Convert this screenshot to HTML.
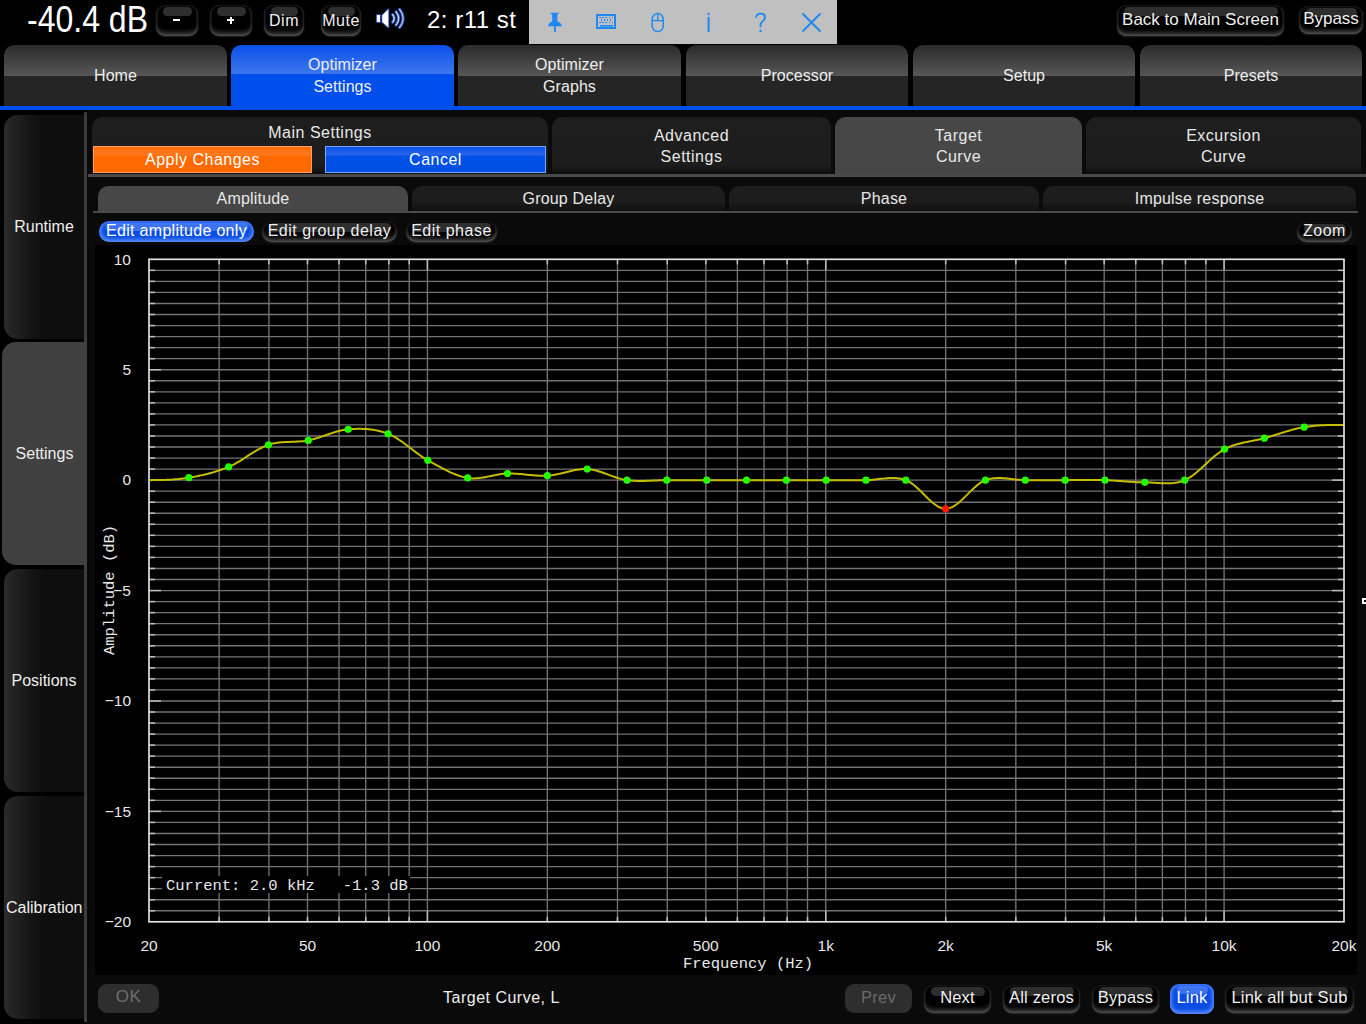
<!DOCTYPE html>
<html><head><meta charset="utf-8">
<style>
*{box-sizing:border-box;margin:0;padding:0}
html,body{width:1366px;height:1024px;overflow:hidden;background:#000}
body{position:relative;font-family:"Liberation Sans",sans-serif;color:#f0f0f0;letter-spacing:.5px}
svg{letter-spacing:0}
.a{position:absolute}
.c{display:flex;align-items:center;justify-content:center;text-align:center;white-space:nowrap}
.gb{position:absolute;background:#000;border-radius:9px;box-shadow:inset 0 -5px 5px -2px rgba(150,150,150,.5),inset 0 0 3px rgba(100,100,100,.6),0 1px 2px rgba(70,70,70,.5);display:flex;align-items:center;justify-content:center;white-space:nowrap;color:#f0f0f0;font-size:16px}
.gb::before{content:"";position:absolute;left:7px;right:6px;top:2px;height:9px;border-radius:5px;background:#2e2e2e}
.gb span{position:relative;top:-1px}
.bb{position:absolute;background:#0a4de4;box-shadow:inset 0 0 4px 1px rgba(120,160,255,.75),inset 0 -3px 4px rgba(110,150,255,.5);display:flex;align-items:center;justify-content:center;white-space:nowrap;color:#fff}
.bb::before{content:"";position:absolute;left:7px;right:6px;top:2px;height:8px;border-radius:5px;background:rgba(120,160,255,.45)}
.bb span{position:relative}
.mt{position:absolute;top:45px;letter-spacing:.05px;height:61px;border-radius:10px 10px 0 0;background:linear-gradient(#2a2a2a,#575757 31px,#252525 31px,#252525);font-size:16px;line-height:22px;color:#eee}
.mt.sel{background:linear-gradient(#0a50ea,#3e76ec 29px,#004fec 29px,#004fec)}
.lt{position:absolute;left:4px;width:80px;letter-spacing:0;border-radius:14px 0 0 14px;background:linear-gradient(90deg,#2a2a2a,#141414 28px,#0e0e0e 40px,#0e0e0e);font-size:16px;color:#eee}
.st{position:absolute;top:117px;height:58px;border-radius:11px 11px 0 0;background:linear-gradient(#1e1e1e,#1d1d1d 48px,#0c0c0c);font-size:16px;line-height:21px;color:#e8e8e8}
.st.sel{background:#474747}
.t2{position:absolute;top:186px;height:26px;letter-spacing:.2px;border-radius:10px 10px 0 0;background:linear-gradient(#1e1e1e,#1c1c1c 16px,#0e0e0e);font-size:16px;color:#e8e8e8}
.t2.sel{background:#474747}
.ax{font-family:"Liberation Sans",sans-serif;font-size:15.5px;fill:#e8e8e8}
.mono{font-family:"Liberation Mono",monospace;font-size:15.5px;fill:#e8e8e8}
</style></head><body>
<!-- top bar -->
<div class="a" style="left:27px;top:0;height:40px;font-size:32px;line-height:40px;color:#fff;letter-spacing:0;transform:scaleY(1.13);transform-origin:0 50%">-40.4 dB</div>
<div class="gb" style="left:156px;top:5px;width:42px;height:31px"></div><div class="a" style="left:173px;top:19px;width:6.5px;height:2.4px;background:#fff"></div>
<div class="gb" style="left:210px;top:5px;width:42px;height:31px"></div><div class="a" style="left:227px;top:19.3px;width:7.2px;height:2.2px;background:#fff"></div><div class="a" style="left:229.5px;top:16.8px;width:2.2px;height:7.4px;background:#fff"></div>
<div class="gb" style="left:264px;top:5px;width:40px;height:31px;font-size:16px"><span style="top:0px">Dim</span></div>
<div class="gb" style="left:321px;top:5px;width:40px;height:31px;font-size:16px"><span style="top:0px">Mute</span></div>
<svg class="a" style="left:374px;top:8px" width="34" height="22" viewBox="0 0 34 22">
 <g stroke="#1d3f96" stroke-width="2" stroke-linejoin="round" fill="#fff">
 <rect x="2.8" y="7" width="3.2" height="7"/>
 <path d="M8.2 7.2 L14.4 1.2 V19.6 L8.2 14 Z"/>
 </g>
 <rect x="2.8" y="7" width="3.2" height="7" fill="#fff"/>
 <path d="M8.2 7.2 L14.4 1.2 V19.6 L8.2 14 Z" fill="#fff"/>
 <g fill="none" stroke-linecap="round">
 <path d="M18.6 6.6 Q21.8 10.4 18.6 14.2" stroke="#2c52b4" stroke-width="3.2"/>
 <path d="M22 3.8 Q27.2 10.4 22 17" stroke="#2c52b4" stroke-width="3.2"/>
 <path d="M25.6 1.4 Q32.4 10.4 25.6 19.4" stroke="#2c52b4" stroke-width="3.2"/>
 <path d="M18.6 6.6 Q21.8 10.4 18.6 14.2" stroke="#e6ecff" stroke-width="1.2" stroke-dasharray="1.6 1"/>
 <path d="M22 3.8 Q27.2 10.4 22 17" stroke="#e6ecff" stroke-width="1.2" stroke-dasharray="1.6 1"/>
 <path d="M25.6 1.4 Q32.4 10.4 25.6 19.4" stroke="#c8d4f4" stroke-width="1.2" stroke-dasharray="1.6 1"/>
 </g>
</svg>
<div class="a" style="left:427px;top:0;height:40px;line-height:40px;font-size:24px;color:#fff">2: r11 st</div>
<div class="a" style="left:529px;top:0;width:308px;height:44px;background:#c0c0c0"></div>
<svg class="a" style="left:529px;top:0" width="308" height="44" viewBox="0 0 308 44">
 <g fill="#1f88f5">
 <path d="M21.2 12.8 H30.1 L28.3 15 V21.3 Q32 22.5 33.1 26.2 H18.9 Q20 22.5 23.2 21.3 V15 Z"/>
 <rect x="25.1" y="26" width="1.8" height="6"/>
 <path d="M67 14 H87 V29 H67 Z M69 16 V27 H85 V16 Z" fill-rule="evenodd"/>
 <rect x="70" y="16.9" width="2.5" height="1"/><rect x="73" y="16.9" width="2" height="1"/><rect x="76" y="16.9" width="2" height="1"/><rect x="80" y="16.9" width="1" height="1"/><rect x="83" y="16.9" width="1" height="1"/>
 <rect x="72" y="18.8" width="1" height="2.3"/><rect x="75" y="18.8" width="1" height="2.3"/><rect x="78" y="18.8" width="1" height="2.3"/><rect x="81" y="18.8" width="1" height="2.3"/>
 <rect x="70" y="22" width="2.5" height="1"/><rect x="73" y="22" width="2" height="1"/><rect x="76" y="22" width="2" height="1"/><rect x="80" y="22" width="1" height="1"/><rect x="83" y="22" width="1" height="1"/>
 <rect x="71" y="25" width="13" height="1.7"/>
 <rect x="178.6" y="12.9" width="2" height="2.3"/><rect x="178.6" y="16.9" width="2" height="15.1"/>
 <rect x="230.5" y="29.8" width="2" height="2.2"/>
 </g>
 <rect x="123.2" y="13.6" width="11" height="18" rx="5.5" fill="none" stroke="#1f88f5" stroke-width="1.5"/>
 <path d="M123 20.6 H134.4 M128.7 13.6 V20.6" stroke="#1f88f5" stroke-width="1.3"/>
 <path d="M227 17.6 Q227.5 13.6 231.7 13.6 Q236 13.6 236 17.4 Q236 19.8 233.2 21.8 Q231.5 23 231.5 25.2 V27.2" fill="none" stroke="#1f88f5" stroke-width="1.9"/>
 <path d="M273.5 13.5 L291.5 31.5 M291.5 13.5 L273.5 31.5" stroke="#1f88f5" stroke-width="1.9"/>
</svg>
<div class="gb" style="left:1117px;top:5px;width:167px;height:31px;font-size:17px;letter-spacing:0px"><span>Back to Main Screen</span></div>
<div class="gb" style="left:1299px;top:6px;width:64px;height:28px;font-size:17px;letter-spacing:0px"><span>Bypass</span></div>

<!-- main tabs -->
<div class="mt c" style="left:4px;width:223px">Home</div>
<div class="mt c sel" style="left:231px;width:223px">Optimizer<br>Settings</div>
<div class="mt c" style="left:458px;width:223px">Optimizer<br>Graphs</div>
<div class="mt c" style="left:686px;width:222px">Processor</div>
<div class="mt c" style="left:913px;width:222px">Setup</div>
<div class="mt c" style="left:1140px;width:222px">Presets</div>
<div class="a" style="left:0;top:106px;width:1366px;height:4px;background:#004fec"></div>

<!-- left panel -->
<div class="a" style="left:87px;top:110px;width:1279px;height:914px;background:#0a0a0a"></div>
<div class="a" style="left:84px;top:112px;width:3px;height:910px;background:#3c3c3c"></div>
<div class="lt c" style="top:115px;height:224px">Runtime</div>
<div class="a c" style="left:2px;top:342px;width:85px;height:223px;border-radius:14px 0 0 14px;background:#404040;font-size:16px;color:#eee;letter-spacing:0">Settings</div>
<div class="lt c" style="top:569px;height:223px">Positions</div>
<div class="lt c" style="top:796px;height:223px;justify-content:flex-start;padding-left:2px">Calibration</div>

<!-- sub tabs -->
<div class="st" style="left:92px;width:456px">
  <div class="a c" style="left:0;top:5px;width:456px;height:20px">Main Settings</div>
</div>
<div class="a c" style="left:93px;top:146px;width:219px;height:27px;background:linear-gradient(#ff6d0a,#ff7a20 8px,#ff6a00 9px,#ff6a00);border:1px solid #ffa060;font-size:16px;color:#fff">Apply Changes</div>
<div class="a c" style="left:325px;top:146px;width:221px;height:27px;background:linear-gradient(#0a52e8,#2a66ea 8px,#0050e6 9px,#0050e6);border:1px solid #7aa4ff;font-size:16px;color:#fff">Cancel</div>
<div class="st c" style="left:552px;width:279px">Advanced<br>Settings</div>
<div class="st c sel" style="left:835px;width:247px;height:60px;padding-bottom:3px">Target<br>Curve</div>
<div class="st c" style="left:1086px;width:275px">Excursion<br>Curve</div>
<div class="a" style="left:88px;top:174px;width:1278px;height:3px;background:#4a4a4a"></div>

<div class="t2 c sel" style="left:98px;width:310px">Amplitude</div>
<div class="t2 c" style="left:412px;width:313px">Group Delay</div>
<div class="t2 c" style="left:729px;width:310px">Phase</div>
<div class="t2 c" style="left:1043px;width:313px">Impulse response</div>
<div class="a" style="left:93px;top:211px;width:1265px;height:2px;background:#4a4a4a"></div>

<div class="bb" style="left:99px;top:221px;width:155px;height:21px;border-radius:11px;font-size:16px;letter-spacing:.3px"><span style="top:-1px">Edit amplitude only</span></div>
<div class="gb" style="left:262px;top:221px;width:135px;height:21px;border-radius:11px;font-size:16px"><span>Edit group delay</span></div>
<div class="gb" style="left:406px;top:221px;width:91px;height:21px;border-radius:11px;font-size:16px"><span>Edit phase</span></div>
<div class="gb" style="left:1297px;top:222px;width:55px;height:20px;border-radius:10px;font-size:16px"><span>Zoom</span></div>

<!-- chart -->
<div class="a" style="left:95px;top:245px;width:1262px;height:730px;background:#000"></div>
<svg class="a" style="left:0;top:0" width="1366" height="1024" viewBox="0 0 1366 1024">
<line x1="149.0" y1="270.34" x2="1344.0" y2="270.34" stroke="#737373" stroke-width="1.35"/>
<line x1="149.0" y1="281.38" x2="1344.0" y2="281.38" stroke="#737373" stroke-width="1.35"/>
<line x1="149.0" y1="292.43" x2="1344.0" y2="292.43" stroke="#737373" stroke-width="1.35"/>
<line x1="149.0" y1="303.47" x2="1344.0" y2="303.47" stroke="#737373" stroke-width="1.35"/>
<line x1="149.0" y1="314.51" x2="1344.0" y2="314.51" stroke="#737373" stroke-width="1.35"/>
<line x1="149.0" y1="325.55" x2="1344.0" y2="325.55" stroke="#737373" stroke-width="1.35"/>
<line x1="149.0" y1="336.59" x2="1344.0" y2="336.59" stroke="#737373" stroke-width="1.35"/>
<line x1="149.0" y1="347.63" x2="1344.0" y2="347.63" stroke="#737373" stroke-width="1.35"/>
<line x1="149.0" y1="358.68" x2="1344.0" y2="358.68" stroke="#737373" stroke-width="1.35"/>
<line x1="149.0" y1="369.72" x2="1344.0" y2="369.72" stroke="#737373" stroke-width="1.35"/>
<line x1="149.0" y1="380.76" x2="1344.0" y2="380.76" stroke="#737373" stroke-width="1.35"/>
<line x1="149.0" y1="391.80" x2="1344.0" y2="391.80" stroke="#737373" stroke-width="1.35"/>
<line x1="149.0" y1="402.84" x2="1344.0" y2="402.84" stroke="#737373" stroke-width="1.35"/>
<line x1="149.0" y1="413.88" x2="1344.0" y2="413.88" stroke="#737373" stroke-width="1.35"/>
<line x1="149.0" y1="424.93" x2="1344.0" y2="424.93" stroke="#737373" stroke-width="1.35"/>
<line x1="149.0" y1="435.97" x2="1344.0" y2="435.97" stroke="#737373" stroke-width="1.35"/>
<line x1="149.0" y1="447.01" x2="1344.0" y2="447.01" stroke="#737373" stroke-width="1.35"/>
<line x1="149.0" y1="458.05" x2="1344.0" y2="458.05" stroke="#737373" stroke-width="1.35"/>
<line x1="149.0" y1="469.09" x2="1344.0" y2="469.09" stroke="#737373" stroke-width="1.35"/>
<line x1="149.0" y1="480.13" x2="1344.0" y2="480.13" stroke="#737373" stroke-width="1.35"/>
<line x1="149.0" y1="491.18" x2="1344.0" y2="491.18" stroke="#737373" stroke-width="1.35"/>
<line x1="149.0" y1="502.22" x2="1344.0" y2="502.22" stroke="#737373" stroke-width="1.35"/>
<line x1="149.0" y1="513.26" x2="1344.0" y2="513.26" stroke="#737373" stroke-width="1.35"/>
<line x1="149.0" y1="524.30" x2="1344.0" y2="524.30" stroke="#737373" stroke-width="1.35"/>
<line x1="149.0" y1="535.34" x2="1344.0" y2="535.34" stroke="#737373" stroke-width="1.35"/>
<line x1="149.0" y1="546.38" x2="1344.0" y2="546.38" stroke="#737373" stroke-width="1.35"/>
<line x1="149.0" y1="557.42" x2="1344.0" y2="557.42" stroke="#737373" stroke-width="1.35"/>
<line x1="149.0" y1="568.47" x2="1344.0" y2="568.47" stroke="#737373" stroke-width="1.35"/>
<line x1="149.0" y1="579.51" x2="1344.0" y2="579.51" stroke="#737373" stroke-width="1.35"/>
<line x1="149.0" y1="590.55" x2="1344.0" y2="590.55" stroke="#737373" stroke-width="1.35"/>
<line x1="149.0" y1="601.59" x2="1344.0" y2="601.59" stroke="#737373" stroke-width="1.35"/>
<line x1="149.0" y1="612.63" x2="1344.0" y2="612.63" stroke="#737373" stroke-width="1.35"/>
<line x1="149.0" y1="623.67" x2="1344.0" y2="623.67" stroke="#737373" stroke-width="1.35"/>
<line x1="149.0" y1="634.72" x2="1344.0" y2="634.72" stroke="#737373" stroke-width="1.35"/>
<line x1="149.0" y1="645.76" x2="1344.0" y2="645.76" stroke="#737373" stroke-width="1.35"/>
<line x1="149.0" y1="656.80" x2="1344.0" y2="656.80" stroke="#737373" stroke-width="1.35"/>
<line x1="149.0" y1="667.84" x2="1344.0" y2="667.84" stroke="#737373" stroke-width="1.35"/>
<line x1="149.0" y1="678.88" x2="1344.0" y2="678.88" stroke="#737373" stroke-width="1.35"/>
<line x1="149.0" y1="689.92" x2="1344.0" y2="689.92" stroke="#737373" stroke-width="1.35"/>
<line x1="149.0" y1="700.97" x2="1344.0" y2="700.97" stroke="#737373" stroke-width="1.35"/>
<line x1="149.0" y1="712.01" x2="1344.0" y2="712.01" stroke="#737373" stroke-width="1.35"/>
<line x1="149.0" y1="723.05" x2="1344.0" y2="723.05" stroke="#737373" stroke-width="1.35"/>
<line x1="149.0" y1="734.09" x2="1344.0" y2="734.09" stroke="#737373" stroke-width="1.35"/>
<line x1="149.0" y1="745.13" x2="1344.0" y2="745.13" stroke="#737373" stroke-width="1.35"/>
<line x1="149.0" y1="756.17" x2="1344.0" y2="756.17" stroke="#737373" stroke-width="1.35"/>
<line x1="149.0" y1="767.22" x2="1344.0" y2="767.22" stroke="#737373" stroke-width="1.35"/>
<line x1="149.0" y1="778.26" x2="1344.0" y2="778.26" stroke="#737373" stroke-width="1.35"/>
<line x1="149.0" y1="789.30" x2="1344.0" y2="789.30" stroke="#737373" stroke-width="1.35"/>
<line x1="149.0" y1="800.34" x2="1344.0" y2="800.34" stroke="#737373" stroke-width="1.35"/>
<line x1="149.0" y1="811.38" x2="1344.0" y2="811.38" stroke="#737373" stroke-width="1.35"/>
<line x1="149.0" y1="822.42" x2="1344.0" y2="822.42" stroke="#737373" stroke-width="1.35"/>
<line x1="149.0" y1="833.47" x2="1344.0" y2="833.47" stroke="#737373" stroke-width="1.35"/>
<line x1="149.0" y1="844.51" x2="1344.0" y2="844.51" stroke="#737373" stroke-width="1.35"/>
<line x1="149.0" y1="855.55" x2="1344.0" y2="855.55" stroke="#737373" stroke-width="1.35"/>
<line x1="149.0" y1="866.59" x2="1344.0" y2="866.59" stroke="#737373" stroke-width="1.35"/>
<line x1="149.0" y1="877.63" x2="1344.0" y2="877.63" stroke="#737373" stroke-width="1.35"/>
<line x1="149.0" y1="888.67" x2="1344.0" y2="888.67" stroke="#737373" stroke-width="1.35"/>
<line x1="149.0" y1="899.72" x2="1344.0" y2="899.72" stroke="#737373" stroke-width="1.35"/>
<line x1="149.0" y1="910.76" x2="1344.0" y2="910.76" stroke="#737373" stroke-width="1.35"/>
<line x1="219.14" y1="259.3" x2="219.14" y2="921.8" stroke="#737373" stroke-width="1.35"/>
<line x1="268.91" y1="259.3" x2="268.91" y2="921.8" stroke="#737373" stroke-width="1.35"/>
<line x1="307.51" y1="259.3" x2="307.51" y2="921.8" stroke="#737373" stroke-width="1.35"/>
<line x1="339.05" y1="259.3" x2="339.05" y2="921.8" stroke="#737373" stroke-width="1.35"/>
<line x1="365.72" y1="259.3" x2="365.72" y2="921.8" stroke="#737373" stroke-width="1.35"/>
<line x1="388.82" y1="259.3" x2="388.82" y2="921.8" stroke="#737373" stroke-width="1.35"/>
<line x1="409.20" y1="259.3" x2="409.20" y2="921.8" stroke="#737373" stroke-width="1.35"/>
<line x1="427.42" y1="259.3" x2="427.42" y2="921.8" stroke="#737373" stroke-width="1.35"/>
<line x1="547.33" y1="259.3" x2="547.33" y2="921.8" stroke="#737373" stroke-width="1.35"/>
<line x1="617.48" y1="259.3" x2="617.48" y2="921.8" stroke="#737373" stroke-width="1.35"/>
<line x1="667.24" y1="259.3" x2="667.24" y2="921.8" stroke="#737373" stroke-width="1.35"/>
<line x1="705.85" y1="259.3" x2="705.85" y2="921.8" stroke="#737373" stroke-width="1.35"/>
<line x1="737.39" y1="259.3" x2="737.39" y2="921.8" stroke="#737373" stroke-width="1.35"/>
<line x1="764.05" y1="259.3" x2="764.05" y2="921.8" stroke="#737373" stroke-width="1.35"/>
<line x1="787.15" y1="259.3" x2="787.15" y2="921.8" stroke="#737373" stroke-width="1.35"/>
<line x1="807.53" y1="259.3" x2="807.53" y2="921.8" stroke="#737373" stroke-width="1.35"/>
<line x1="825.76" y1="259.3" x2="825.76" y2="921.8" stroke="#737373" stroke-width="1.35"/>
<line x1="945.67" y1="259.3" x2="945.67" y2="921.8" stroke="#737373" stroke-width="1.35"/>
<line x1="1015.81" y1="259.3" x2="1015.81" y2="921.8" stroke="#737373" stroke-width="1.35"/>
<line x1="1065.58" y1="259.3" x2="1065.58" y2="921.8" stroke="#737373" stroke-width="1.35"/>
<line x1="1104.18" y1="259.3" x2="1104.18" y2="921.8" stroke="#737373" stroke-width="1.35"/>
<line x1="1135.72" y1="259.3" x2="1135.72" y2="921.8" stroke="#737373" stroke-width="1.35"/>
<line x1="1162.39" y1="259.3" x2="1162.39" y2="921.8" stroke="#737373" stroke-width="1.35"/>
<line x1="1185.49" y1="259.3" x2="1185.49" y2="921.8" stroke="#737373" stroke-width="1.35"/>
<line x1="1205.86" y1="259.3" x2="1205.86" y2="921.8" stroke="#737373" stroke-width="1.35"/>
<line x1="1224.09" y1="259.3" x2="1224.09" y2="921.8" stroke="#737373" stroke-width="1.35"/>
<line x1="149.0" y1="270.34" x2="155.0" y2="270.34" stroke="#bdbdbd" stroke-width="1.5"/>
<line x1="1338.0" y1="270.34" x2="1344.0" y2="270.34" stroke="#bdbdbd" stroke-width="1.5"/>
<line x1="149.0" y1="281.38" x2="155.0" y2="281.38" stroke="#bdbdbd" stroke-width="1.5"/>
<line x1="1338.0" y1="281.38" x2="1344.0" y2="281.38" stroke="#bdbdbd" stroke-width="1.5"/>
<line x1="149.0" y1="292.43" x2="155.0" y2="292.43" stroke="#bdbdbd" stroke-width="1.5"/>
<line x1="1338.0" y1="292.43" x2="1344.0" y2="292.43" stroke="#bdbdbd" stroke-width="1.5"/>
<line x1="149.0" y1="303.47" x2="155.0" y2="303.47" stroke="#bdbdbd" stroke-width="1.5"/>
<line x1="1338.0" y1="303.47" x2="1344.0" y2="303.47" stroke="#bdbdbd" stroke-width="1.5"/>
<line x1="149.0" y1="314.51" x2="155.0" y2="314.51" stroke="#bdbdbd" stroke-width="1.5"/>
<line x1="1338.0" y1="314.51" x2="1344.0" y2="314.51" stroke="#bdbdbd" stroke-width="1.5"/>
<line x1="149.0" y1="325.55" x2="155.0" y2="325.55" stroke="#bdbdbd" stroke-width="1.5"/>
<line x1="1338.0" y1="325.55" x2="1344.0" y2="325.55" stroke="#bdbdbd" stroke-width="1.5"/>
<line x1="149.0" y1="336.59" x2="155.0" y2="336.59" stroke="#bdbdbd" stroke-width="1.5"/>
<line x1="1338.0" y1="336.59" x2="1344.0" y2="336.59" stroke="#bdbdbd" stroke-width="1.5"/>
<line x1="149.0" y1="347.63" x2="155.0" y2="347.63" stroke="#bdbdbd" stroke-width="1.5"/>
<line x1="1338.0" y1="347.63" x2="1344.0" y2="347.63" stroke="#bdbdbd" stroke-width="1.5"/>
<line x1="149.0" y1="358.68" x2="155.0" y2="358.68" stroke="#bdbdbd" stroke-width="1.5"/>
<line x1="1338.0" y1="358.68" x2="1344.0" y2="358.68" stroke="#bdbdbd" stroke-width="1.5"/>
<line x1="149.0" y1="369.72" x2="161.0" y2="369.72" stroke="#bdbdbd" stroke-width="1.5"/>
<line x1="1332.0" y1="369.72" x2="1344.0" y2="369.72" stroke="#bdbdbd" stroke-width="1.5"/>
<line x1="149.0" y1="380.76" x2="155.0" y2="380.76" stroke="#bdbdbd" stroke-width="1.5"/>
<line x1="1338.0" y1="380.76" x2="1344.0" y2="380.76" stroke="#bdbdbd" stroke-width="1.5"/>
<line x1="149.0" y1="391.80" x2="155.0" y2="391.80" stroke="#bdbdbd" stroke-width="1.5"/>
<line x1="1338.0" y1="391.80" x2="1344.0" y2="391.80" stroke="#bdbdbd" stroke-width="1.5"/>
<line x1="149.0" y1="402.84" x2="155.0" y2="402.84" stroke="#bdbdbd" stroke-width="1.5"/>
<line x1="1338.0" y1="402.84" x2="1344.0" y2="402.84" stroke="#bdbdbd" stroke-width="1.5"/>
<line x1="149.0" y1="413.88" x2="155.0" y2="413.88" stroke="#bdbdbd" stroke-width="1.5"/>
<line x1="1338.0" y1="413.88" x2="1344.0" y2="413.88" stroke="#bdbdbd" stroke-width="1.5"/>
<line x1="149.0" y1="424.93" x2="155.0" y2="424.93" stroke="#bdbdbd" stroke-width="1.5"/>
<line x1="1338.0" y1="424.93" x2="1344.0" y2="424.93" stroke="#bdbdbd" stroke-width="1.5"/>
<line x1="149.0" y1="435.97" x2="155.0" y2="435.97" stroke="#bdbdbd" stroke-width="1.5"/>
<line x1="1338.0" y1="435.97" x2="1344.0" y2="435.97" stroke="#bdbdbd" stroke-width="1.5"/>
<line x1="149.0" y1="447.01" x2="155.0" y2="447.01" stroke="#bdbdbd" stroke-width="1.5"/>
<line x1="1338.0" y1="447.01" x2="1344.0" y2="447.01" stroke="#bdbdbd" stroke-width="1.5"/>
<line x1="149.0" y1="458.05" x2="155.0" y2="458.05" stroke="#bdbdbd" stroke-width="1.5"/>
<line x1="1338.0" y1="458.05" x2="1344.0" y2="458.05" stroke="#bdbdbd" stroke-width="1.5"/>
<line x1="149.0" y1="469.09" x2="155.0" y2="469.09" stroke="#bdbdbd" stroke-width="1.5"/>
<line x1="1338.0" y1="469.09" x2="1344.0" y2="469.09" stroke="#bdbdbd" stroke-width="1.5"/>
<line x1="149.0" y1="480.13" x2="161.0" y2="480.13" stroke="#bdbdbd" stroke-width="1.5"/>
<line x1="1332.0" y1="480.13" x2="1344.0" y2="480.13" stroke="#bdbdbd" stroke-width="1.5"/>
<line x1="149.0" y1="491.18" x2="155.0" y2="491.18" stroke="#bdbdbd" stroke-width="1.5"/>
<line x1="1338.0" y1="491.18" x2="1344.0" y2="491.18" stroke="#bdbdbd" stroke-width="1.5"/>
<line x1="149.0" y1="502.22" x2="155.0" y2="502.22" stroke="#bdbdbd" stroke-width="1.5"/>
<line x1="1338.0" y1="502.22" x2="1344.0" y2="502.22" stroke="#bdbdbd" stroke-width="1.5"/>
<line x1="149.0" y1="513.26" x2="155.0" y2="513.26" stroke="#bdbdbd" stroke-width="1.5"/>
<line x1="1338.0" y1="513.26" x2="1344.0" y2="513.26" stroke="#bdbdbd" stroke-width="1.5"/>
<line x1="149.0" y1="524.30" x2="155.0" y2="524.30" stroke="#bdbdbd" stroke-width="1.5"/>
<line x1="1338.0" y1="524.30" x2="1344.0" y2="524.30" stroke="#bdbdbd" stroke-width="1.5"/>
<line x1="149.0" y1="535.34" x2="155.0" y2="535.34" stroke="#bdbdbd" stroke-width="1.5"/>
<line x1="1338.0" y1="535.34" x2="1344.0" y2="535.34" stroke="#bdbdbd" stroke-width="1.5"/>
<line x1="149.0" y1="546.38" x2="155.0" y2="546.38" stroke="#bdbdbd" stroke-width="1.5"/>
<line x1="1338.0" y1="546.38" x2="1344.0" y2="546.38" stroke="#bdbdbd" stroke-width="1.5"/>
<line x1="149.0" y1="557.42" x2="155.0" y2="557.42" stroke="#bdbdbd" stroke-width="1.5"/>
<line x1="1338.0" y1="557.42" x2="1344.0" y2="557.42" stroke="#bdbdbd" stroke-width="1.5"/>
<line x1="149.0" y1="568.47" x2="155.0" y2="568.47" stroke="#bdbdbd" stroke-width="1.5"/>
<line x1="1338.0" y1="568.47" x2="1344.0" y2="568.47" stroke="#bdbdbd" stroke-width="1.5"/>
<line x1="149.0" y1="579.51" x2="155.0" y2="579.51" stroke="#bdbdbd" stroke-width="1.5"/>
<line x1="1338.0" y1="579.51" x2="1344.0" y2="579.51" stroke="#bdbdbd" stroke-width="1.5"/>
<line x1="149.0" y1="590.55" x2="161.0" y2="590.55" stroke="#bdbdbd" stroke-width="1.5"/>
<line x1="1332.0" y1="590.55" x2="1344.0" y2="590.55" stroke="#bdbdbd" stroke-width="1.5"/>
<line x1="149.0" y1="601.59" x2="155.0" y2="601.59" stroke="#bdbdbd" stroke-width="1.5"/>
<line x1="1338.0" y1="601.59" x2="1344.0" y2="601.59" stroke="#bdbdbd" stroke-width="1.5"/>
<line x1="149.0" y1="612.63" x2="155.0" y2="612.63" stroke="#bdbdbd" stroke-width="1.5"/>
<line x1="1338.0" y1="612.63" x2="1344.0" y2="612.63" stroke="#bdbdbd" stroke-width="1.5"/>
<line x1="149.0" y1="623.67" x2="155.0" y2="623.67" stroke="#bdbdbd" stroke-width="1.5"/>
<line x1="1338.0" y1="623.67" x2="1344.0" y2="623.67" stroke="#bdbdbd" stroke-width="1.5"/>
<line x1="149.0" y1="634.72" x2="155.0" y2="634.72" stroke="#bdbdbd" stroke-width="1.5"/>
<line x1="1338.0" y1="634.72" x2="1344.0" y2="634.72" stroke="#bdbdbd" stroke-width="1.5"/>
<line x1="149.0" y1="645.76" x2="155.0" y2="645.76" stroke="#bdbdbd" stroke-width="1.5"/>
<line x1="1338.0" y1="645.76" x2="1344.0" y2="645.76" stroke="#bdbdbd" stroke-width="1.5"/>
<line x1="149.0" y1="656.80" x2="155.0" y2="656.80" stroke="#bdbdbd" stroke-width="1.5"/>
<line x1="1338.0" y1="656.80" x2="1344.0" y2="656.80" stroke="#bdbdbd" stroke-width="1.5"/>
<line x1="149.0" y1="667.84" x2="155.0" y2="667.84" stroke="#bdbdbd" stroke-width="1.5"/>
<line x1="1338.0" y1="667.84" x2="1344.0" y2="667.84" stroke="#bdbdbd" stroke-width="1.5"/>
<line x1="149.0" y1="678.88" x2="155.0" y2="678.88" stroke="#bdbdbd" stroke-width="1.5"/>
<line x1="1338.0" y1="678.88" x2="1344.0" y2="678.88" stroke="#bdbdbd" stroke-width="1.5"/>
<line x1="149.0" y1="689.92" x2="155.0" y2="689.92" stroke="#bdbdbd" stroke-width="1.5"/>
<line x1="1338.0" y1="689.92" x2="1344.0" y2="689.92" stroke="#bdbdbd" stroke-width="1.5"/>
<line x1="149.0" y1="700.97" x2="161.0" y2="700.97" stroke="#bdbdbd" stroke-width="1.5"/>
<line x1="1332.0" y1="700.97" x2="1344.0" y2="700.97" stroke="#bdbdbd" stroke-width="1.5"/>
<line x1="149.0" y1="712.01" x2="155.0" y2="712.01" stroke="#bdbdbd" stroke-width="1.5"/>
<line x1="1338.0" y1="712.01" x2="1344.0" y2="712.01" stroke="#bdbdbd" stroke-width="1.5"/>
<line x1="149.0" y1="723.05" x2="155.0" y2="723.05" stroke="#bdbdbd" stroke-width="1.5"/>
<line x1="1338.0" y1="723.05" x2="1344.0" y2="723.05" stroke="#bdbdbd" stroke-width="1.5"/>
<line x1="149.0" y1="734.09" x2="155.0" y2="734.09" stroke="#bdbdbd" stroke-width="1.5"/>
<line x1="1338.0" y1="734.09" x2="1344.0" y2="734.09" stroke="#bdbdbd" stroke-width="1.5"/>
<line x1="149.0" y1="745.13" x2="155.0" y2="745.13" stroke="#bdbdbd" stroke-width="1.5"/>
<line x1="1338.0" y1="745.13" x2="1344.0" y2="745.13" stroke="#bdbdbd" stroke-width="1.5"/>
<line x1="149.0" y1="756.17" x2="155.0" y2="756.17" stroke="#bdbdbd" stroke-width="1.5"/>
<line x1="1338.0" y1="756.17" x2="1344.0" y2="756.17" stroke="#bdbdbd" stroke-width="1.5"/>
<line x1="149.0" y1="767.22" x2="155.0" y2="767.22" stroke="#bdbdbd" stroke-width="1.5"/>
<line x1="1338.0" y1="767.22" x2="1344.0" y2="767.22" stroke="#bdbdbd" stroke-width="1.5"/>
<line x1="149.0" y1="778.26" x2="155.0" y2="778.26" stroke="#bdbdbd" stroke-width="1.5"/>
<line x1="1338.0" y1="778.26" x2="1344.0" y2="778.26" stroke="#bdbdbd" stroke-width="1.5"/>
<line x1="149.0" y1="789.30" x2="155.0" y2="789.30" stroke="#bdbdbd" stroke-width="1.5"/>
<line x1="1338.0" y1="789.30" x2="1344.0" y2="789.30" stroke="#bdbdbd" stroke-width="1.5"/>
<line x1="149.0" y1="800.34" x2="155.0" y2="800.34" stroke="#bdbdbd" stroke-width="1.5"/>
<line x1="1338.0" y1="800.34" x2="1344.0" y2="800.34" stroke="#bdbdbd" stroke-width="1.5"/>
<line x1="149.0" y1="811.38" x2="161.0" y2="811.38" stroke="#bdbdbd" stroke-width="1.5"/>
<line x1="1332.0" y1="811.38" x2="1344.0" y2="811.38" stroke="#bdbdbd" stroke-width="1.5"/>
<line x1="149.0" y1="822.42" x2="155.0" y2="822.42" stroke="#bdbdbd" stroke-width="1.5"/>
<line x1="1338.0" y1="822.42" x2="1344.0" y2="822.42" stroke="#bdbdbd" stroke-width="1.5"/>
<line x1="149.0" y1="833.47" x2="155.0" y2="833.47" stroke="#bdbdbd" stroke-width="1.5"/>
<line x1="1338.0" y1="833.47" x2="1344.0" y2="833.47" stroke="#bdbdbd" stroke-width="1.5"/>
<line x1="149.0" y1="844.51" x2="155.0" y2="844.51" stroke="#bdbdbd" stroke-width="1.5"/>
<line x1="1338.0" y1="844.51" x2="1344.0" y2="844.51" stroke="#bdbdbd" stroke-width="1.5"/>
<line x1="149.0" y1="855.55" x2="155.0" y2="855.55" stroke="#bdbdbd" stroke-width="1.5"/>
<line x1="1338.0" y1="855.55" x2="1344.0" y2="855.55" stroke="#bdbdbd" stroke-width="1.5"/>
<line x1="149.0" y1="866.59" x2="155.0" y2="866.59" stroke="#bdbdbd" stroke-width="1.5"/>
<line x1="1338.0" y1="866.59" x2="1344.0" y2="866.59" stroke="#bdbdbd" stroke-width="1.5"/>
<line x1="149.0" y1="877.63" x2="155.0" y2="877.63" stroke="#bdbdbd" stroke-width="1.5"/>
<line x1="1338.0" y1="877.63" x2="1344.0" y2="877.63" stroke="#bdbdbd" stroke-width="1.5"/>
<line x1="149.0" y1="888.67" x2="155.0" y2="888.67" stroke="#bdbdbd" stroke-width="1.5"/>
<line x1="1338.0" y1="888.67" x2="1344.0" y2="888.67" stroke="#bdbdbd" stroke-width="1.5"/>
<line x1="149.0" y1="899.72" x2="155.0" y2="899.72" stroke="#bdbdbd" stroke-width="1.5"/>
<line x1="1338.0" y1="899.72" x2="1344.0" y2="899.72" stroke="#bdbdbd" stroke-width="1.5"/>
<line x1="149.0" y1="910.76" x2="155.0" y2="910.76" stroke="#bdbdbd" stroke-width="1.5"/>
<line x1="1338.0" y1="910.76" x2="1344.0" y2="910.76" stroke="#bdbdbd" stroke-width="1.5"/>
<line x1="219.14" y1="259.3" x2="219.14" y2="264.3" stroke="#bdbdbd" stroke-width="1.5"/>
<line x1="219.14" y1="916.8" x2="219.14" y2="921.8" stroke="#bdbdbd" stroke-width="1.5"/>
<line x1="268.91" y1="259.3" x2="268.91" y2="264.3" stroke="#bdbdbd" stroke-width="1.5"/>
<line x1="268.91" y1="916.8" x2="268.91" y2="921.8" stroke="#bdbdbd" stroke-width="1.5"/>
<line x1="307.51" y1="259.3" x2="307.51" y2="264.3" stroke="#bdbdbd" stroke-width="1.5"/>
<line x1="307.51" y1="916.8" x2="307.51" y2="921.8" stroke="#bdbdbd" stroke-width="1.5"/>
<line x1="339.05" y1="259.3" x2="339.05" y2="264.3" stroke="#bdbdbd" stroke-width="1.5"/>
<line x1="339.05" y1="916.8" x2="339.05" y2="921.8" stroke="#bdbdbd" stroke-width="1.5"/>
<line x1="365.72" y1="259.3" x2="365.72" y2="264.3" stroke="#bdbdbd" stroke-width="1.5"/>
<line x1="365.72" y1="916.8" x2="365.72" y2="921.8" stroke="#bdbdbd" stroke-width="1.5"/>
<line x1="388.82" y1="259.3" x2="388.82" y2="264.3" stroke="#bdbdbd" stroke-width="1.5"/>
<line x1="388.82" y1="916.8" x2="388.82" y2="921.8" stroke="#bdbdbd" stroke-width="1.5"/>
<line x1="409.20" y1="259.3" x2="409.20" y2="264.3" stroke="#bdbdbd" stroke-width="1.5"/>
<line x1="409.20" y1="916.8" x2="409.20" y2="921.8" stroke="#bdbdbd" stroke-width="1.5"/>
<line x1="427.42" y1="259.3" x2="427.42" y2="270.3" stroke="#bdbdbd" stroke-width="1.5"/>
<line x1="427.42" y1="910.8" x2="427.42" y2="921.8" stroke="#bdbdbd" stroke-width="1.5"/>
<line x1="547.33" y1="259.3" x2="547.33" y2="264.3" stroke="#bdbdbd" stroke-width="1.5"/>
<line x1="547.33" y1="916.8" x2="547.33" y2="921.8" stroke="#bdbdbd" stroke-width="1.5"/>
<line x1="617.48" y1="259.3" x2="617.48" y2="264.3" stroke="#bdbdbd" stroke-width="1.5"/>
<line x1="617.48" y1="916.8" x2="617.48" y2="921.8" stroke="#bdbdbd" stroke-width="1.5"/>
<line x1="667.24" y1="259.3" x2="667.24" y2="264.3" stroke="#bdbdbd" stroke-width="1.5"/>
<line x1="667.24" y1="916.8" x2="667.24" y2="921.8" stroke="#bdbdbd" stroke-width="1.5"/>
<line x1="705.85" y1="259.3" x2="705.85" y2="264.3" stroke="#bdbdbd" stroke-width="1.5"/>
<line x1="705.85" y1="916.8" x2="705.85" y2="921.8" stroke="#bdbdbd" stroke-width="1.5"/>
<line x1="737.39" y1="259.3" x2="737.39" y2="264.3" stroke="#bdbdbd" stroke-width="1.5"/>
<line x1="737.39" y1="916.8" x2="737.39" y2="921.8" stroke="#bdbdbd" stroke-width="1.5"/>
<line x1="764.05" y1="259.3" x2="764.05" y2="264.3" stroke="#bdbdbd" stroke-width="1.5"/>
<line x1="764.05" y1="916.8" x2="764.05" y2="921.8" stroke="#bdbdbd" stroke-width="1.5"/>
<line x1="787.15" y1="259.3" x2="787.15" y2="264.3" stroke="#bdbdbd" stroke-width="1.5"/>
<line x1="787.15" y1="916.8" x2="787.15" y2="921.8" stroke="#bdbdbd" stroke-width="1.5"/>
<line x1="807.53" y1="259.3" x2="807.53" y2="264.3" stroke="#bdbdbd" stroke-width="1.5"/>
<line x1="807.53" y1="916.8" x2="807.53" y2="921.8" stroke="#bdbdbd" stroke-width="1.5"/>
<line x1="825.76" y1="259.3" x2="825.76" y2="270.3" stroke="#bdbdbd" stroke-width="1.5"/>
<line x1="825.76" y1="910.8" x2="825.76" y2="921.8" stroke="#bdbdbd" stroke-width="1.5"/>
<line x1="945.67" y1="259.3" x2="945.67" y2="264.3" stroke="#bdbdbd" stroke-width="1.5"/>
<line x1="945.67" y1="916.8" x2="945.67" y2="921.8" stroke="#bdbdbd" stroke-width="1.5"/>
<line x1="1015.81" y1="259.3" x2="1015.81" y2="264.3" stroke="#bdbdbd" stroke-width="1.5"/>
<line x1="1015.81" y1="916.8" x2="1015.81" y2="921.8" stroke="#bdbdbd" stroke-width="1.5"/>
<line x1="1065.58" y1="259.3" x2="1065.58" y2="264.3" stroke="#bdbdbd" stroke-width="1.5"/>
<line x1="1065.58" y1="916.8" x2="1065.58" y2="921.8" stroke="#bdbdbd" stroke-width="1.5"/>
<line x1="1104.18" y1="259.3" x2="1104.18" y2="264.3" stroke="#bdbdbd" stroke-width="1.5"/>
<line x1="1104.18" y1="916.8" x2="1104.18" y2="921.8" stroke="#bdbdbd" stroke-width="1.5"/>
<line x1="1135.72" y1="259.3" x2="1135.72" y2="264.3" stroke="#bdbdbd" stroke-width="1.5"/>
<line x1="1135.72" y1="916.8" x2="1135.72" y2="921.8" stroke="#bdbdbd" stroke-width="1.5"/>
<line x1="1162.39" y1="259.3" x2="1162.39" y2="264.3" stroke="#bdbdbd" stroke-width="1.5"/>
<line x1="1162.39" y1="916.8" x2="1162.39" y2="921.8" stroke="#bdbdbd" stroke-width="1.5"/>
<line x1="1185.49" y1="259.3" x2="1185.49" y2="264.3" stroke="#bdbdbd" stroke-width="1.5"/>
<line x1="1185.49" y1="916.8" x2="1185.49" y2="921.8" stroke="#bdbdbd" stroke-width="1.5"/>
<line x1="1205.86" y1="259.3" x2="1205.86" y2="264.3" stroke="#bdbdbd" stroke-width="1.5"/>
<line x1="1205.86" y1="916.8" x2="1205.86" y2="921.8" stroke="#bdbdbd" stroke-width="1.5"/>
<line x1="1224.09" y1="259.3" x2="1224.09" y2="270.3" stroke="#bdbdbd" stroke-width="1.5"/>
<line x1="1224.09" y1="910.8" x2="1224.09" y2="921.8" stroke="#bdbdbd" stroke-width="1.5"/>
<rect x="149.0" y="259.3" width="1195.0" height="662.5" fill="none" stroke="#e0e0e0" stroke-width="1.7"/>
<rect x="162" y="876" width="248" height="17" fill="#000"/>
<path d="M149.0,480.13 L151.0,480.13 L153.0,480.12 L155.0,480.11 L157.0,480.09 L159.0,480.06 L161.0,480.02 L163.0,479.97 L165.0,479.91 L167.0,479.84 L169.0,479.74 L171.0,479.63 L173.0,479.51 L175.0,479.36 L177.0,479.19 L179.0,479.00 L181.0,478.79 L183.0,478.55 L185.0,478.29 L187.0,478.00 L189.0,477.68 L191.0,477.34 L193.0,476.98 L195.0,476.61 L197.0,476.22 L199.0,475.81 L201.0,475.38 L203.0,474.93 L205.0,474.46 L207.0,473.97 L209.0,473.46 L211.0,472.92 L213.0,472.35 L215.0,471.75 L217.0,471.13 L219.0,470.48 L221.0,469.80 L223.0,469.08 L225.0,468.34 L227.0,467.56 L229.0,466.74 L231.0,465.85 L233.0,464.87 L235.0,463.82 L237.0,462.69 L239.0,461.52 L241.0,460.29 L243.0,459.04 L245.0,457.76 L247.0,456.46 L249.0,455.17 L251.0,453.89 L253.0,452.63 L255.0,451.40 L257.0,450.22 L259.0,449.09 L261.0,448.02 L263.0,447.04 L265.0,446.13 L267.0,445.33 L269.0,444.64 L271.0,444.05 L273.0,443.55 L275.0,443.14 L277.0,442.81 L279.0,442.54 L281.0,442.33 L283.0,442.17 L285.0,442.05 L287.0,441.95 L289.0,441.88 L291.0,441.82 L293.0,441.76 L295.0,441.69 L297.0,441.61 L299.0,441.50 L301.0,441.36 L303.0,441.17 L305.0,440.93 L307.0,440.63 L309.0,440.25 L311.0,439.80 L313.0,439.30 L315.0,438.74 L317.0,438.14 L319.0,437.50 L321.0,436.83 L323.0,436.14 L325.0,435.45 L327.0,434.75 L329.0,434.05 L331.0,433.37 L333.0,432.71 L335.0,432.09 L337.0,431.50 L339.0,430.96 L341.0,430.48 L343.0,430.06 L345.0,429.72 L347.0,429.45 L349.0,429.27 L351.0,429.13 L353.0,429.01 L355.0,428.92 L357.0,428.86 L359.0,428.83 L361.0,428.84 L363.0,428.89 L365.0,428.98 L367.0,429.11 L369.0,429.29 L371.0,429.52 L373.0,429.80 L375.0,430.13 L377.0,430.51 L379.0,430.96 L381.0,431.47 L383.0,432.04 L385.0,432.67 L387.0,433.38 L389.0,434.16 L391.0,435.07 L393.0,436.09 L395.0,437.21 L397.0,438.43 L399.0,439.72 L401.0,441.09 L403.0,442.51 L405.0,443.98 L407.0,445.48 L409.0,447.01 L411.0,448.54 L413.0,450.08 L415.0,451.60 L417.0,453.09 L419.0,454.55 L421.0,455.96 L423.0,457.31 L425.0,458.59 L427.0,459.79 L429.0,460.91 L431.0,462.02 L433.0,463.15 L435.0,464.26 L437.0,465.38 L439.0,466.48 L441.0,467.56 L443.0,468.62 L445.0,469.66 L447.0,470.66 L449.0,471.62 L451.0,472.55 L453.0,473.42 L455.0,474.24 L457.0,475.01 L459.0,475.72 L461.0,476.35 L463.0,476.92 L465.0,477.40 L467.0,477.81 L469.0,478.12 L471.0,478.31 L473.0,478.39 L475.0,478.37 L477.0,478.27 L479.0,478.08 L481.0,477.84 L483.0,477.53 L485.0,477.18 L487.0,476.80 L489.0,476.39 L491.0,475.98 L493.0,475.56 L495.0,475.15 L497.0,474.76 L499.0,474.41 L501.0,474.10 L503.0,473.84 L505.0,473.64 L507.0,473.52 L509.0,473.48 L511.0,473.49 L513.0,473.55 L515.0,473.64 L517.0,473.77 L519.0,473.92 L521.0,474.10 L523.0,474.30 L525.0,474.50 L527.0,474.71 L529.0,474.91 L531.0,475.11 L533.0,475.30 L535.0,475.47 L537.0,475.61 L539.0,475.72 L541.0,475.79 L543.0,475.82 L545.0,475.81 L547.0,475.73 L549.0,475.59 L551.0,475.37 L553.0,475.08 L555.0,474.73 L557.0,474.33 L559.0,473.89 L561.0,473.41 L563.0,472.92 L565.0,472.42 L567.0,471.91 L569.0,471.42 L571.0,470.95 L573.0,470.50 L575.0,470.10 L577.0,469.75 L579.0,469.45 L581.0,469.23 L583.0,469.09 L585.0,469.03 L587.0,469.08 L589.0,469.24 L591.0,469.51 L593.0,469.87 L595.0,470.31 L597.0,470.83 L599.0,471.42 L601.0,472.05 L603.0,472.73 L605.0,473.44 L607.0,474.17 L609.0,474.90 L611.0,475.64 L613.0,476.36 L615.0,477.06 L617.0,477.72 L619.0,478.34 L621.0,478.90 L623.0,479.39 L625.0,479.81 L627.0,480.13 L629.0,480.38 L631.0,480.58 L633.0,480.73 L635.0,480.84 L637.0,480.91 L639.0,480.95 L641.0,480.95 L643.0,480.93 L645.0,480.88 L647.0,480.82 L649.0,480.74 L651.0,480.66 L653.0,480.57 L655.0,480.48 L657.0,480.39 L659.0,480.30 L661.0,480.23 L663.0,480.18 L665.0,480.14 L667.0,480.13 L669.0,480.13 L671.0,480.13 L673.0,480.13 L675.0,480.13 L677.0,480.13 L679.0,480.13 L681.0,480.13 L683.0,480.13 L685.0,480.13 L687.0,480.13 L689.0,480.13 L691.0,480.13 L693.0,480.13 L695.0,480.13 L697.0,480.13 L699.0,480.13 L701.0,480.13 L703.0,480.13 L705.0,480.13 L707.0,480.13 L709.0,480.13 L711.0,480.13 L713.0,480.13 L715.0,480.13 L717.0,480.13 L719.0,480.13 L721.0,480.13 L723.0,480.13 L725.0,480.13 L727.0,480.13 L729.0,480.13 L731.0,480.13 L733.0,480.13 L735.0,480.13 L737.0,480.13 L739.0,480.13 L741.0,480.13 L743.0,480.13 L745.0,480.13 L747.0,480.13 L749.0,480.13 L751.0,480.13 L753.0,480.13 L755.0,480.13 L757.0,480.13 L759.0,480.13 L761.0,480.13 L763.0,480.13 L765.0,480.13 L767.0,480.13 L769.0,480.13 L771.0,480.13 L773.0,480.13 L775.0,480.13 L777.0,480.13 L779.0,480.13 L781.0,480.13 L783.0,480.13 L785.0,480.13 L787.0,480.13 L789.0,480.13 L791.0,480.13 L793.0,480.13 L795.0,480.13 L797.0,480.13 L799.0,480.13 L801.0,480.13 L803.0,480.13 L805.0,480.13 L807.0,480.13 L809.0,480.13 L811.0,480.13 L813.0,480.13 L815.0,480.13 L817.0,480.13 L819.0,480.13 L821.0,480.13 L823.0,480.13 L825.0,480.13 L827.0,480.13 L829.0,480.13 L831.0,480.13 L833.0,480.13 L835.0,480.13 L837.0,480.13 L839.0,480.13 L841.0,480.13 L843.0,480.13 L845.0,480.13 L847.0,480.13 L849.0,480.13 L851.0,480.13 L853.0,480.13 L855.0,480.13 L857.0,480.13 L859.0,480.13 L861.0,480.13 L863.0,480.13 L865.0,480.13 L867.0,480.12 L869.0,480.06 L871.0,479.94 L873.0,479.77 L875.0,479.57 L877.0,479.34 L879.0,479.10 L881.0,478.86 L883.0,478.63 L885.0,478.43 L887.0,478.25 L889.0,478.11 L891.0,478.03 L893.0,478.01 L895.0,478.06 L897.0,478.21 L899.0,478.44 L901.0,478.79 L903.0,479.25 L905.0,479.85 L907.0,480.60 L909.0,481.62 L911.0,482.87 L913.0,484.32 L915.0,485.95 L917.0,487.72 L919.0,489.60 L921.0,491.55 L923.0,493.54 L925.0,495.54 L927.0,497.51 L929.0,499.43 L931.0,501.26 L933.0,502.97 L935.0,504.52 L937.0,505.89 L939.0,507.03 L941.0,507.93 L943.0,508.53 L945.0,508.82 L947.0,508.76 L949.0,508.36 L951.0,507.66 L953.0,506.68 L955.0,505.46 L957.0,504.02 L959.0,502.42 L961.0,500.66 L963.0,498.80 L965.0,496.86 L967.0,494.87 L969.0,492.87 L971.0,490.89 L973.0,488.96 L975.0,487.12 L977.0,485.39 L979.0,483.82 L981.0,482.43 L983.0,481.25 L985.0,480.32 L987.0,479.63 L989.0,479.08 L991.0,478.66 L993.0,478.35 L995.0,478.15 L997.0,478.04 L999.0,478.01 L1001.0,478.05 L1003.0,478.15 L1005.0,478.30 L1007.0,478.49 L1009.0,478.71 L1011.0,478.94 L1013.0,479.18 L1015.0,479.42 L1017.0,479.64 L1019.0,479.83 L1021.0,479.98 L1023.0,480.09 L1025.0,480.13 L1027.0,480.13 L1029.0,480.13 L1031.0,480.13 L1033.0,480.13 L1035.0,480.13 L1037.0,480.13 L1039.0,480.13 L1041.0,480.13 L1043.0,480.13 L1045.0,480.13 L1047.0,480.13 L1049.0,480.13 L1051.0,480.13 L1053.0,480.13 L1055.0,480.13 L1057.0,480.13 L1059.0,480.13 L1061.0,480.13 L1063.0,480.13 L1065.0,480.13 L1067.0,480.13 L1069.0,480.12 L1071.0,480.11 L1073.0,480.10 L1075.0,480.08 L1077.0,480.06 L1079.0,480.05 L1081.0,480.03 L1083.0,480.01 L1085.0,480.00 L1087.0,479.98 L1089.0,479.97 L1091.0,479.97 L1093.0,479.97 L1095.0,479.98 L1097.0,479.99 L1099.0,480.01 L1101.0,480.04 L1103.0,480.08 L1105.0,480.13 L1107.0,480.20 L1109.0,480.29 L1111.0,480.39 L1113.0,480.51 L1115.0,480.64 L1117.0,480.78 L1119.0,480.92 L1121.0,481.07 L1123.0,481.23 L1125.0,481.38 L1127.0,481.53 L1129.0,481.68 L1131.0,481.81 L1133.0,481.94 L1135.0,482.06 L1137.0,482.15 L1139.0,482.23 L1141.0,482.29 L1143.0,482.33 L1145.0,482.34 L1147.0,482.37 L1149.0,482.44 L1151.0,482.53 L1153.0,482.65 L1155.0,482.79 L1157.0,482.92 L1159.0,483.05 L1161.0,483.17 L1163.0,483.26 L1165.0,483.31 L1167.0,483.33 L1169.0,483.29 L1171.0,483.19 L1173.0,483.02 L1175.0,482.77 L1177.0,482.43 L1179.0,481.99 L1181.0,481.44 L1183.0,480.78 L1185.0,479.99 L1187.0,479.04 L1189.0,477.91 L1191.0,476.62 L1193.0,475.20 L1195.0,473.66 L1197.0,472.02 L1199.0,470.30 L1201.0,468.52 L1203.0,466.69 L1205.0,464.84 L1207.0,462.98 L1209.0,461.13 L1211.0,459.31 L1213.0,457.54 L1215.0,455.84 L1217.0,454.22 L1219.0,452.70 L1221.0,451.31 L1223.0,450.05 L1225.0,448.96 L1227.0,447.98 L1229.0,447.09 L1231.0,446.28 L1233.0,445.55 L1235.0,444.89 L1237.0,444.28 L1239.0,443.73 L1241.0,443.23 L1243.0,442.76 L1245.0,442.33 L1247.0,441.92 L1249.0,441.52 L1251.0,441.13 L1253.0,440.74 L1255.0,440.34 L1257.0,439.93 L1259.0,439.50 L1261.0,439.04 L1263.0,438.53 L1265.0,437.99 L1267.0,437.42 L1269.0,436.83 L1271.0,436.22 L1273.0,435.61 L1275.0,434.99 L1277.0,434.36 L1279.0,433.73 L1281.0,433.11 L1283.0,432.49 L1285.0,431.87 L1287.0,431.28 L1289.0,430.69 L1291.0,430.13 L1293.0,429.59 L1295.0,429.07 L1297.0,428.59 L1299.0,428.13 L1301.0,427.71 L1303.0,427.33 L1305.0,427.00 L1307.0,426.69 L1309.0,426.42 L1311.0,426.18 L1313.0,425.97 L1315.0,425.78 L1317.0,425.61 L1319.0,425.47 L1321.0,425.35 L1323.0,425.25 L1325.0,425.16 L1327.0,425.10 L1329.0,425.04 L1331.0,425.00 L1333.0,424.97 L1335.0,424.95 L1337.0,424.94 L1339.0,424.93 L1341.0,424.93 L1343.0,424.93" fill="none" stroke="#c4bd00" stroke-width="2" stroke-linejoin="round"/>
<circle cx="188.83" cy="477.70" r="3.6" fill="#22ff00"/>
<circle cx="228.67" cy="466.88" r="3.6" fill="#22ff00"/>
<circle cx="268.50" cy="444.80" r="3.6" fill="#22ff00"/>
<circle cx="308.33" cy="440.38" r="3.6" fill="#22ff00"/>
<circle cx="348.17" cy="429.34" r="3.6" fill="#22ff00"/>
<circle cx="388.00" cy="433.76" r="3.6" fill="#22ff00"/>
<circle cx="427.83" cy="460.26" r="3.6" fill="#22ff00"/>
<circle cx="467.67" cy="477.93" r="3.6" fill="#22ff00"/>
<circle cx="507.50" cy="473.51" r="3.6" fill="#22ff00"/>
<circle cx="547.33" cy="475.72" r="3.6" fill="#22ff00"/>
<circle cx="587.17" cy="469.09" r="3.6" fill="#22ff00"/>
<circle cx="627.00" cy="480.13" r="3.6" fill="#22ff00"/>
<circle cx="666.83" cy="480.13" r="3.6" fill="#22ff00"/>
<circle cx="706.67" cy="480.13" r="3.6" fill="#22ff00"/>
<circle cx="746.50" cy="480.13" r="3.6" fill="#22ff00"/>
<circle cx="786.33" cy="480.13" r="3.6" fill="#22ff00"/>
<circle cx="826.17" cy="480.13" r="3.6" fill="#22ff00"/>
<circle cx="866.00" cy="480.13" r="3.6" fill="#22ff00"/>
<circle cx="905.83" cy="480.13" r="3.6" fill="#22ff00"/>
<circle cx="945.67" cy="508.84" r="3.6" fill="#ff1a00"/>
<circle cx="985.50" cy="480.13" r="3.6" fill="#22ff00"/>
<circle cx="1025.33" cy="480.13" r="3.6" fill="#22ff00"/>
<circle cx="1065.17" cy="480.13" r="3.6" fill="#22ff00"/>
<circle cx="1105.00" cy="480.13" r="3.6" fill="#22ff00"/>
<circle cx="1144.83" cy="482.34" r="3.6" fill="#22ff00"/>
<circle cx="1184.67" cy="480.13" r="3.6" fill="#22ff00"/>
<circle cx="1224.50" cy="449.22" r="3.6" fill="#22ff00"/>
<circle cx="1264.33" cy="438.17" r="3.6" fill="#22ff00"/>
<circle cx="1304.17" cy="427.13" r="3.6" fill="#22ff00"/>
<text x="131" y="264.5" text-anchor="end" class="ax">10</text>
<text x="131" y="374.9" text-anchor="end" class="ax">5</text>
<text x="131" y="485.3" text-anchor="end" class="ax">0</text>
<text x="131" y="595.8" text-anchor="end" class="ax">−5</text>
<text x="131" y="706.2" text-anchor="end" class="ax">−10</text>
<text x="131" y="816.6" text-anchor="end" class="ax">−15</text>
<text x="131" y="927.0" text-anchor="end" class="ax">−20</text>
<text x="149.0" y="951" text-anchor="middle" class="ax">20</text>
<text x="307.5" y="951" text-anchor="middle" class="ax">50</text>
<text x="427.4" y="951" text-anchor="middle" class="ax">100</text>
<text x="547.3" y="951" text-anchor="middle" class="ax">200</text>
<text x="705.8" y="951" text-anchor="middle" class="ax">500</text>
<text x="825.8" y="951" text-anchor="middle" class="ax">1k</text>
<text x="945.7" y="951" text-anchor="middle" class="ax">2k</text>
<text x="1104.2" y="951" text-anchor="middle" class="ax">5k</text>
<text x="1224.1" y="951" text-anchor="middle" class="ax">10k</text>
<text x="1344.0" y="951" text-anchor="middle" class="ax">20k</text>
<text x="748" y="968" text-anchor="middle" class="mono">Frequency (Hz)</text>
<text transform="translate(114,590) rotate(-90)" text-anchor="middle" class="mono">Amplitude (dB)</text>
<text x="166" y="889.5" class="mono" xml:space="preserve">Current: 2.0 kHz   -1.3 dB</text>
</svg>
<div class="a" style="left:1362px;top:598px;width:6px;height:6px;border:2px solid #fff;background:#000"></div>

<!-- bottom bar -->
<div class="a c" style="left:98px;top:984px;width:61px;height:29px;border-radius:9px;background:#2e2e2e;color:#6e6e6e;font-size:17px;padding-bottom:3px">OK</div>
<div class="a" style="left:443px;top:988px;height:20px;line-height:20px;font-size:16px;color:#eee">Target Curve, L</div>
<div class="a c" style="left:845px;top:984px;width:67px;height:29px;border-radius:9px;background:#2e2e2e;color:#6a6a6a;font-size:16.5px;letter-spacing:.3px;padding-bottom:3px">Prev</div>
<div class="gb" style="left:924px;top:985px;width:67px;height:28px;font-size:16.5px;letter-spacing:.2px"><span style="top:-2px">Next</span></div>
<div class="gb" style="left:1003px;top:985px;width:77px;height:28px;font-size:16.5px;letter-spacing:.2px"><span style="top:-2px">All zeros</span></div>
<div class="gb" style="left:1092px;top:985px;width:67px;height:28px;font-size:16.5px;letter-spacing:.2px"><span style="top:-2px">Bypass</span></div>
<div class="bb" style="left:1170px;top:984px;width:44px;height:30px;border-radius:9px;font-size:16.5px;letter-spacing:.2px"><span style="top:-2px">Link</span></div>
<div class="gb" style="left:1225px;top:985px;width:129px;height:28px;font-size:16.5px;letter-spacing:.2px"><span style="top:-2px">Link all but Sub</span></div>
</body></html>
